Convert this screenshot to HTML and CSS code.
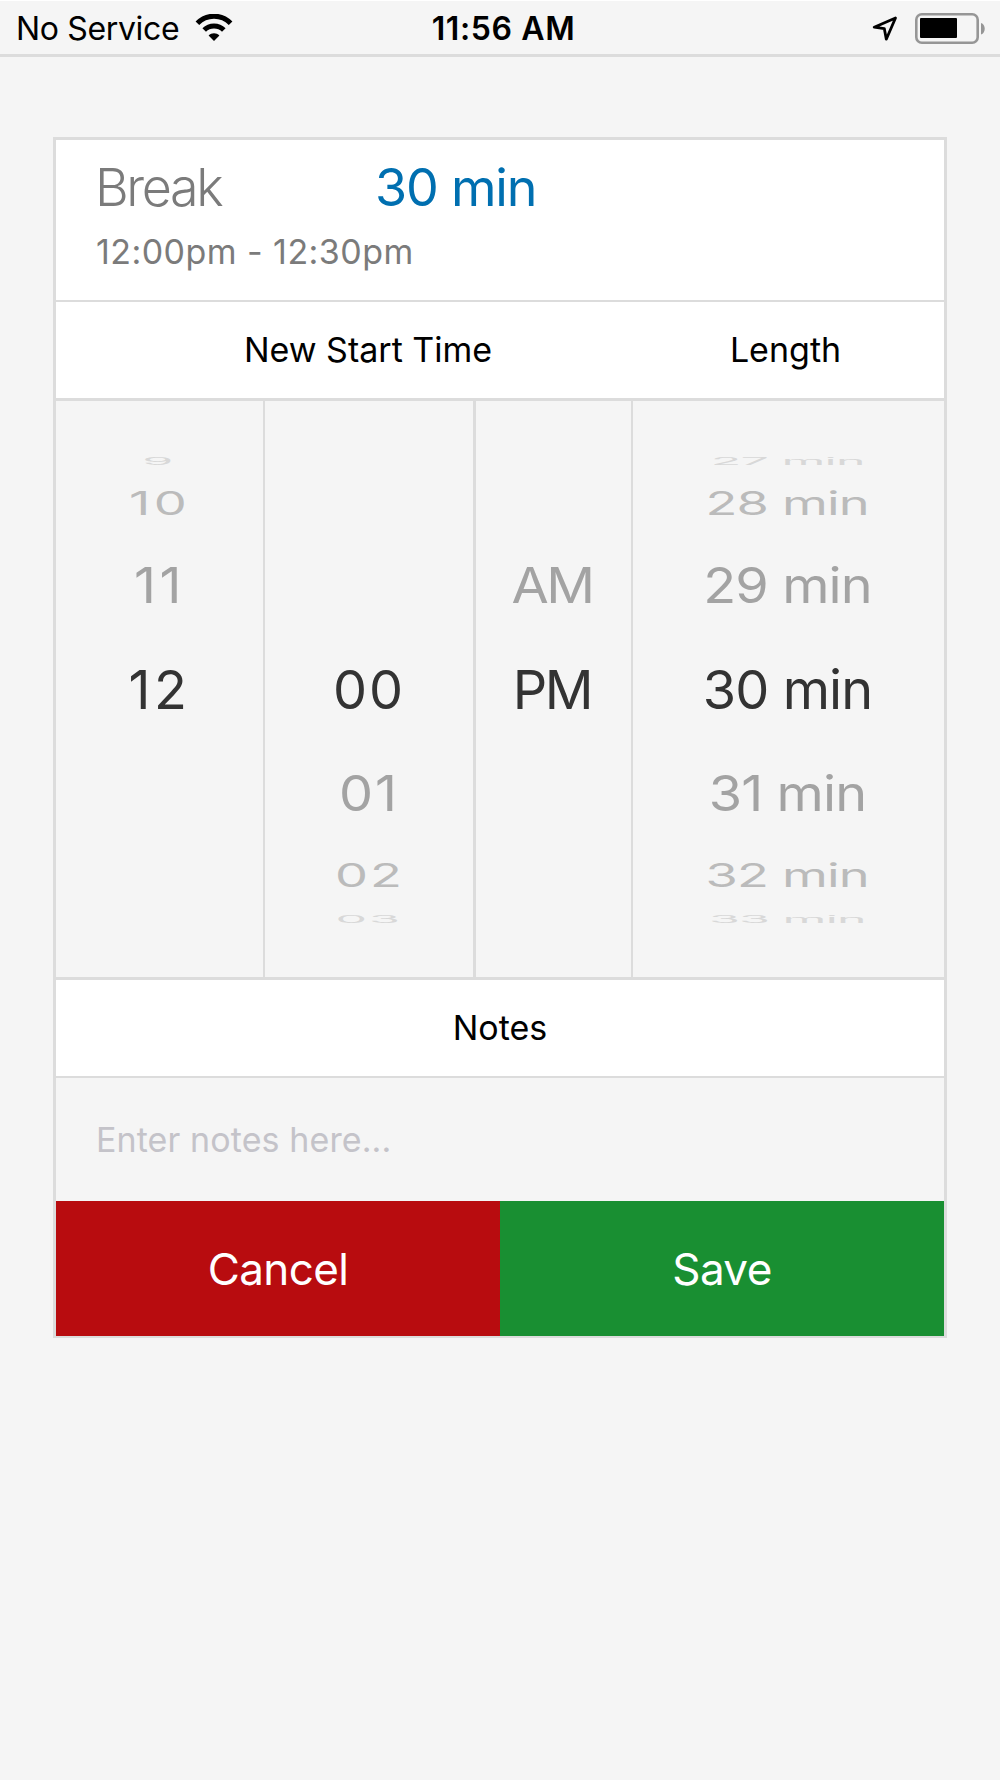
FILE: index.html
```html
<!DOCTYPE html>
<html lang="en">
<head>
<meta charset="utf-8">
<title>Break</title>
<link rel="stylesheet" href="styles.css">
</head>
<body>
<header class="status">
  <div class="status-left">
    <span class="carrier">No Service</span>
    <svg class="wifi" width="38" height="28" viewBox="0 0 38 28">
      <path d="M2.4 9.3C11.5 -.2 26.500 -.2 35.600 9.300" fill="none" stroke="#000" stroke-width="5"/>
      <path d="M9.200 16.100C14.500 10.700 23.500 10.700 28.800 16.100" fill="none" stroke="#000" stroke-width="5"/>
      <path d="M13.600 21.400C16.500 18.400 21.500 18.400 24.400 21.400L19 27z"/>
    </svg>
  </div>
  <div class="clock">11:56 AM</div>
  <div class="status-right">
    <svg class="arrow" width="26" height="26" viewBox="0 0 26 26">
      <path d="M23.500 2L2.200 11.200L12.300 12.600L14.300 23.200z" fill="none" stroke="#000" stroke-width="2.800" stroke-linejoin="round"/>
    </svg>
    <svg class="battery" width="71" height="32" viewBox="0 0 71 32">
      <rect x="1.300" y="1.300" width="61.400" height="28.400" rx="5.500" fill="none" stroke="#969696" stroke-width="2.600"/>
      <rect x="5" y="5" width="37" height="20" rx="1"/>
      <path d="M66 10c5 1.500 5 10 0 11.500z" fill="#969696"/>
    </svg>
  </div>
</header>
<div class="card">
  <div class="head">
    <div class="head-row">
      <span class="name">Break</span>
      <span class="mins">30 min</span>
    </div>
    <div class="range">12:00pm - 12:30pm</div>
  </div>
  <div class="titles">
    <div class="t-start">New Start Time</div>
    <div class="t-length">Length</div>
  </div>
  <div class="picker">
    <div class="col hour">
      <div class="r3"><span>9</span></div>
      <div class="r2"><span>10</span></div>
      <div class="r1"><span>11</span></div>
      <div class="r0"><span>12</span></div>
    </div>
    <div class="col minute">
      <div class="r3"></div>
      <div class="r2"></div>
      <div class="r1"></div>
      <div class="r0"><span>00</span></div>
      <div class="r1"><span>01</span></div>
      <div class="r2"><span>02</span></div>
      <div class="r3"><span>03</span></div>
    </div>
    <div class="col ampm">
      <div class="r3"></div>
      <div class="r2"></div>
      <div class="r1"><span>AM</span></div>
      <div class="r0"><span>PM</span></div>
    </div>
    <div class="col length">
      <div class="r3"><span>27 min</span></div>
      <div class="r2"><span>28 min</span></div>
      <div class="r1"><span>29 min</span></div>
      <div class="r0"><span>30 min</span></div>
      <div class="r1"><span>31 min</span></div>
      <div class="r2"><span>32 min</span></div>
      <div class="r3"><span>33 min</span></div>
    </div>
  </div>
  <div class="notes-title">Notes</div>
  <input type="text" class="notes" placeholder="Enter notes here...">
  <div class="btnarea">
    <button class="cancel">Cancel</button>
    <button class="save">Save</button>
  </div>
</div>
</body>
</html>
```
FILE: styles.css
```css
* {box-sizing: border-box;}
body {margin: 0;height: 1780px;background: #f5f5f5;font-family: Inter,"Liberation Sans",sans-serif;color: #000;}
svg {display: block;}

.status {display: grid;grid-template-columns: 1fr auto 1fr;height: 57px;border-top: 1px solid #fff;border-bottom: 3px solid #dcdcdc;font-size: 32px;line-height: 56px;}
.status-left {display: flex;gap: 16px;padding-left: 16px;}
.carrier {letter-spacing: -.35px;}
.wifi {margin-top: 13px;}
.clock {font-weight: 600;padding-left: 7px;letter-spacing: .6px;}
.status-right {display: flex;justify-content: flex-end;gap: 17px;padding-right: 14px;}
.arrow {margin-top: 15px;}
.battery {margin-top: 12px;}

.card {width: 894px;margin: 80px 0 0 53px;border: 3px solid #dcdcdc;border-bottom-width: 2px;}
.head {height: 162px;padding: 16px 0 0 40px;background: #fff;border-bottom: 2px solid #dcdcdc;color: #7b7b7b;}
.head-row {display: flex;font-size: 52px;line-height: 63px;}
.name {width: 280px;margin-left: -1px;font-weight: 300;letter-spacing: -2.4px;}
.mins {color: #006fb0;letter-spacing: -1.2px;}
.range {margin-top: 11px;font-size: 34px;line-height: 44px;letter-spacing: .45px;}
.titles {display: flex;height: 99px;background: #fff;border-bottom: 3px solid #dcdcdc;font-size: 34px;line-height: 96px;text-align: center;}
.t-start {width: 624px;}
.t-length {width: 211px;}

.picker {display: flex;height: 579px;border-bottom: 3px solid #dcdcdc;font-size: 54px;}
.col {padding-top: 49px;border-right: 2px solid #dcdcdc;}
.hour {width: 209px;letter-spacing: 3.500px;}
.minute {width: 211px;border-right-width: 3px;letter-spacing: 2px;}
.ampm {width: 157px;padding-right: 3px;letter-spacing: -2.500px;}
.length {width: 311px;padding-right: 2px;border-right: 0;letter-spacing: -.9px;}
.r0,.r1,.r2,.r3 {display: flex;justify-content: center;align-items: center;line-height: 1;}
.r0 {height: 108px;color: #333;}
.r1 {height: 100px;color: #a3a3a3;}
.r2 {height: 64px;color: #bbb;}
.r3 {height: 22px;color: #d8d8d8;}
.col span {white-space: nowrap;}
.r1 span {transform: scaleY(.9);}
.r2 span {transform: scale(.97,.6);}
.r3 span {transform: scale(.93,.19);}

.notes-title {height: 98px;background: #fff;border-bottom: 2px solid #dcdcdc;font-size: 34px;line-height: 96px;text-align: center;}
.notes {display: block;width: 100%;height: 123px;padding: 0 0 0 40px;border: 0;background: transparent;font: 34px Inter,"Liberation Sans",sans-serif;letter-spacing: .1px;}
.notes::placeholder {color: #c4c3c9;opacity: 1;}
.btnarea {display: flex;height: 135px;}
.btnarea button {width: 444px;padding: 0;border: 0;color: #fff;font: 44px Inter,"Liberation Sans",sans-serif;letter-spacing: -.6px;}
.btnarea .cancel {background: #b80c0f;}
.btnarea .save {background: #198f32;}
```
